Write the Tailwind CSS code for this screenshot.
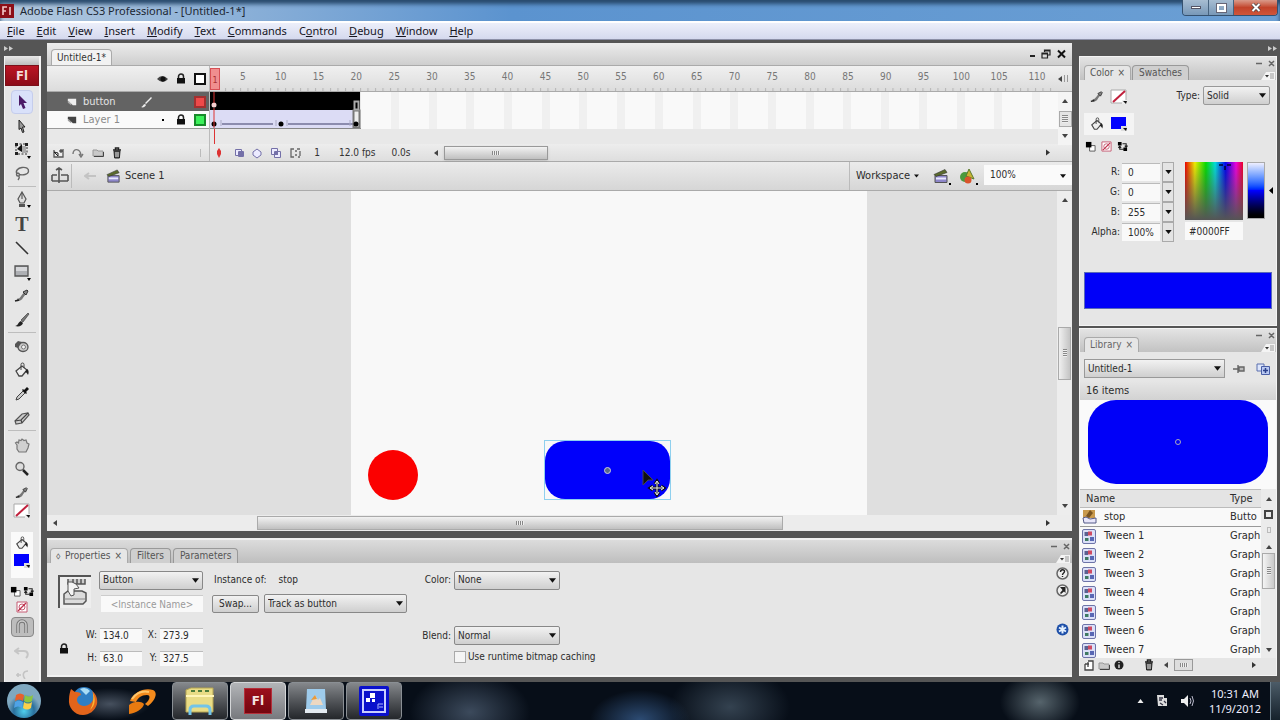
<!DOCTYPE html>
<html lang="en">
<head>
<meta charset="utf-8">
<meta name="viewport" content="width=device-width, initial-scale=1">
<title>Adobe Flash CS3 Professional - [Untitled-1*]</title>
<script src="https://cdn.jsdelivr.net/npm/@tailwindcss/browser@4"></script>
</head>
<body class="flex min-h-screen flex-col overflow-x-hidden bg-[#555555] font-['DejaVu_Sans_Condensed','DejaVu_Sans',sans-serif] text-[10px] leading-4 text-[#2c2c2c]">

<svg class="hidden">
  <symbol id="down" viewBox="0 0 8 5"><path d="M0 0h8L4 5z" fill="#111"/></symbol>
  <symbol id="up" viewBox="0 0 6 4"><path d="M0 4h6L3 0z" fill="#444"/></symbol>
  <symbol id="left" viewBox="0 0 4 6"><path d="M4 0v6L0 3z" fill="#444"/></symbol>
  <symbol id="right" viewBox="0 0 4 6"><path d="M0 0v6l4-3z" fill="#333"/></symbol>
  <symbol id="lock" viewBox="0 0 10 11"><path d="M2.500 5V3.500a2.500 2.500 0 0 1 5 0V5" fill="none" stroke="#222" stroke-width="1.500"/><rect x="1" y="5" width="8" height="5.500" fill="#111"/></symbol>
  <symbol id="page" viewBox="0 0 12 10"><path d="M1 1h10v8H7L1 3z" fill="currentColor"/><path d="M1 3v3l4 3V6z" fill="currentColor" opacity=".5"/></symbol>
  <symbol id="trash" viewBox="0 0 10 12"><path d="M1 3h8M3.500 2.500V1h3v1.500" fill="none" stroke="#222" stroke-width="1.500"/><path d="M2 4h6l-.6 7H2.600z" fill="#555" stroke="#222"/><path d="M4 5v5M6 5v5" stroke="#ddd"/></symbol>
  <symbol id="folder" viewBox="0 0 12 9"><path d="M1 2h4l1 1h5v5H1z" fill="#c9c9c9" stroke="#999"/><path d="M2 8.500h9.500V4" fill="none" stroke="#444"/></symbol>
  <symbol id="pencil" viewBox="0 0 16 16"><path d="M3 12c3 0 4-1 5-3l3-4" fill="none" stroke="#777" stroke-width="2.600"/><path d="M9 4l4-2 1 1-2 4z" fill="#888" stroke="#333"/><path d="M1 13l4-1" stroke="#222" stroke-width="1.600"/></symbol>
  <symbol id="bucket" viewBox="0 0 16 16"><path d="M2 9l6-5 5 4-5 6H5z" fill="#eee" stroke="#444" stroke-width="1.300"/><path d="M7 8V2.500a1.500 1.500 0 0 1 3 0V6" fill="none" stroke="#444"/><path d="M13 7c2 1 2 4 1 6-1-2-2-3-3-3z" fill="#222"/></symbol>
  <symbol id="nostroke" viewBox="0 0 18 16"><path d="M1 1h15v13H1z" fill="#fff" stroke="#aaa"/><path d="M3 13L15 2" stroke="#c0203c" stroke-width="2"/><path d="M12 11h5v4h-5z" fill="#eee"/><path d="M13 12h4l-1 3z" fill="#111"/></symbol>
  <symbol id="bluefill" viewBox="0 0 18 16"><path d="M1 1h15v12H1z" fill="#00f"/><path d="M11 10h6v5h-6z" fill="#ddd"/><path d="M13 12h4l-1 3z" fill="#111"/></symbol>
  <symbol id="bw" viewBox="0 0 12 12"><path d="M5 5h6v6H5z" fill="#fff" stroke="#555"/><path d="M1 1h6v6H1z" fill="#000"/></symbol>
  <symbol id="none" viewBox="0 0 12 12"><path d="M1 1h10v10H1z" fill="#fff" stroke="#c55a72"/><circle cx="6" cy="6" r="3" fill="none" stroke="#c55a72"/><path d="M2 10l8-8" stroke="#c0304c" stroke-width="1.300"/></symbol>
  <symbol id="swap" viewBox="0 0 12 12"><path d="M1 1h4v4H1zM7 7h4v4H7z" fill="#000"/><path d="M6 3h4v3M8 9H3V6M1.500 7.500L3 5.500l1.500 2M8.500 5L10 7l1.500-2" fill="none" stroke="#222" stroke-width="1.200"/></symbol>
  <symbol id="clap" viewBox="0 0 16 16"><path d="M2 7h12v7H2z" fill="#8d86c9" stroke="#555"/><path d="M3 9h10v2H3z" fill="#e8e8ff"/><path d="M1 6L12 1l2 3L3 8z" fill="#5b6b2c" stroke="#333" stroke-width=".6"/></symbol>
  <symbol id="graphic" viewBox="0 0 14 15"><rect x=".5" y=".5" width="13" height="14" rx="1.500" fill="#dbe0f8" stroke="#6e74a8"/><path d="M2.500 3h3.500v4H2.500z" fill="#5b6190"/><path d="M6 2.500h4v4H6z" fill="#cf4a62"/><path d="M8 8h4v4H8z" fill="#5867b4"/><path d="M3 9h3.500v3H3z" fill="#3f7a62"/></symbol>
  <symbol id="menuopt" viewBox="0 0 14 9"><path d="M0 9L5 1h9v8z" fill="#f4f4f4"/><path d="M4 4h4L6 6.500z" fill="#333"/><path d="M10 2v6M12 2v6" stroke="#999"/></symbol>
</svg>

<!-- title bar -->
<header>
  <div class="flex h-[21px] items-center bg-linear-to-r from-[#b4c9de] via-[#5b93cf] via-40% to-[#6b9fd4] font-['Noto_Sans',sans-serif] text-[#1c2733] shadow-[inset_0_4px_4px_#27496b]">
    <svg class="h-4 w-[14px] shrink-0" viewBox="0 0 14 16"><path d="M0 1h14v14H0z" fill="#8c0f18"/><path d="M3 12V4h4M3 8h3M10 4v8" fill="none" stroke="#f2c9c9" stroke-width="1.600"/></svg>
    <h1 class="ml-1.5 whitespace-nowrap text-[11px]">Adobe Flash CS3 Professional - [Untitled-1*]</h1>
    <div class="mr-0.5 ml-auto flex h-4 self-start overflow-hidden rounded-b border-x border-b border-[#35516f]">
      <button aria-label="Minimize" class="flex w-[26px] items-center justify-center border-r border-[#47637f] bg-linear-to-b from-[#a7bdd2] to-[#7898b8]"><span class="h-[3px] w-[10px] border border-[#556] bg-white"></span></button>
      <button aria-label="Maximize" class="flex w-[25px] items-center justify-center border-r border-[#47637f] bg-linear-to-b from-[#a7bdd2] to-[#7898b8]"><span class="h-2 w-[9px] border-2 border-white outline outline-[#667]"></span></button>
      <button aria-label="Close" class="flex w-[43px] items-center justify-center bg-linear-to-b from-[#d99a8a] via-[#c2432a] to-[#d0563a]"><svg class="h-[9px] w-[10px]" viewBox="0 0 10 9"><path d="M1.500 1l7 7M8.500 1l-7 7" stroke="#444" stroke-width="3.500"/><path d="M1.500 1l7 7M8.500 1l-7 7" stroke="#fff" stroke-width="2"/></svg></button>
    </div>
  </div>
  <nav class="flex h-[19px] items-center gap-3 border-t-2 border-b border-t-white border-b-[#8d90a8] bg-linear-to-b from-[#eceffa] to-[#d5d9ee] px-[7px] font-['Noto_Sans',sans-serif] text-[11px] text-[#15151f]">
    <a href="#"><u>F</u>ile</a><a href="#"><u>E</u>dit</a><a href="#"><u>V</u>iew</a><a href="#"><u>I</u>nsert</a><a href="#"><u>M</u>odify</a><a href="#"><u>T</u>ext</a><a href="#"><u>C</u>ommands</a><a href="#">C<u>o</u>ntrol</a><a href="#"><u>D</u>ebug</a><a href="#"><u>W</u>indow</a><a href="#"><u>H</u>elp</a>
  </nav>
</header>

<div class="flex flex-1 pr-[3px] pl-1">

  <!-- tools panel -->
  <aside class="flex w-[37px] shrink-0 flex-col">
    <div class="flex h-4 items-center text-[#ddd]"><svg class="h-[5px] w-[9px]" viewBox="0 0 9 5"><path d="M0 0l4 2.500L0 5zM5 0l4 2.500L5 5z" fill="#ccc"/></svg></div>
    <div class="flex flex-1 flex-col items-center border-r-2 border-l border-[#f4f4f4] bg-[#e6e6e6]">
      <div class="h-[9px] w-full bg-linear-to-b from-[#e8e8e8] to-[#bdbdbd]"></div>
      <div class="mb-1 flex h-[21px] w-full items-center justify-center border border-[#7b1019] bg-linear-to-b from-[#bb1424] to-[#8d0c17] text-[13px] font-bold text-[#f3dcdc]">Fl</div>
      <div class="flex flex-col items-center">
        <button aria-label="Selection" class="flex h-6 w-[22px] items-center justify-center rounded-sm border border-[#c5cdec] bg-[#d9e1fa]"><svg class="size-4" viewBox="0 0 16 16"><path d="M5 1l8 8H9.500l2 5-2.500 1-2-5L5 12z" fill="#4a1a66"/></svg></button>
        <button aria-label="Subselection" class="flex h-6 items-center justify-center"><svg class="size-4" viewBox="0 0 16 16"><path d="M5 2l6 7H8.500l1.500 5-1.500.5L7 10l-2 1.500z" fill="#999" stroke="#222"/></svg></button>
        <button aria-label="Free Transform" class="flex h-[23px] items-center justify-center"><svg class="size-[18px]" viewBox="0 0 18 18"><path d="M3 3h11v10H3z" fill="none" stroke="#333" stroke-dasharray="2 1.500"/><path d="M2 2h3v3H2zM12 2h3v3h-3zM2 11h3v3H2z" fill="#222"/><path d="M4 8l5-5v8z" fill="#111"/><path d="M9 5h4v7H9z" fill="#aaa"/><path d="M14 15h4l-2 3z"/></svg></button>
        <button aria-label="Lasso" class="flex h-6 items-center justify-center"><svg class="size-4" viewBox="0 0 16 16"><path d="M3 9C1 6 4 3 8 2.500s7 1 6.500 4S9 10.500 5 9.500M4 8c2 1 2 3 0 3s-2-3 0-3m1 3c1 2 0 3-1 4" fill="none" stroke="#666" stroke-width="1.400"/></svg></button>
      </div>
      <hr class="my-px w-7 border-[#bdbdbd]">
      <div class="flex flex-col items-center">
        <button aria-label="Pen" class="flex h-6 items-center justify-center"><svg class="size-[18px]" viewBox="0 0 18 18"><path d="M9 1l4 7-2 4H7L5 8z" fill="#ddd" stroke="#555" stroke-width="1.200"/><path d="M9 2v6" stroke="#444"/><path d="M6 13h6v3H6z" fill="#555"/><path d="M14 14h4l-2 3z"/></svg></button>
        <button aria-label="Text" class="flex h-6 items-center justify-center font-['Liberation_Serif',serif] text-[20px] font-bold text-[#444]">T</button>
        <button aria-label="Line" class="flex h-6 items-center justify-center"><svg class="size-4" viewBox="0 0 16 16"><path d="M2 2l12 12" stroke="#333" stroke-width="1.600"/></svg></button>
        <button aria-label="Rectangle" class="flex h-6 items-center justify-center"><svg class="size-[18px]" viewBox="0 0 18 18"><path d="M2 3h13v10H2z" fill="#aeb0b4" stroke="#555" stroke-width="1.300"/><path d="M3 4h11v4H3z" fill="#d6d7da"/><path d="M14 15h4l-2 3z"/></svg></button>
        <button aria-label="Pencil" class="flex h-6 items-center justify-center"><svg class="size-4"><use href="#pencil"/></svg></button>
        <button aria-label="Brush" class="flex h-[23px] items-center justify-center"><svg class="size-4" viewBox="0 0 16 16"><path d="M14 1L7 8l2 2 6-8z" fill="#777" stroke="#444" stroke-width=".7"/><path d="M1 14c3 0 3-4 6-5l2 2c-1 3-4 4-8 3z" fill="#222"/></svg></button>
      </div>
      <hr class="my-px w-7 border-[#bdbdbd]">
      <div class="flex flex-col items-center">
        <button aria-label="Ink Bottle" class="flex h-6 items-center justify-center"><svg class="size-4" viewBox="0 0 16 16"><ellipse cx="9" cy="9" rx="5" ry="4.500" fill="#ccc" stroke="#555" stroke-width="1.300"/><circle cx="9.500" cy="9" r="2" fill="#f4f4f4" stroke="#777"/><path d="M1 6l3-3 4 1-4 6-3-1z" fill="#555"/></svg></button>
        <button aria-label="Paint Bucket" class="flex h-6 items-center justify-center"><svg class="size-4"><use href="#bucket"/></svg></button>
        <button aria-label="Eyedropper" class="flex h-6 items-center justify-center"><svg class="size-4" viewBox="0 0 16 16"><path d="M2 14l1-3 6-6 2 2-6 6z" fill="#ccc" stroke="#444"/><path d="M8 4l4 4 1-1-1-1 3-3-2-2-3 3-1-1z" fill="#111"/></svg></button>
        <button aria-label="Eraser" class="flex h-[23px] items-center justify-center"><svg class="size-4" viewBox="0 0 16 16"><path d="M1 11l7-7 6-1 1 2-7 8-6 1z" fill="#ccc" stroke="#555" stroke-width="1.200"/><path d="M1 11l6-1 7-7M7 10l1 3" fill="none" stroke="#444" stroke-width="1.200"/></svg></button>
      </div>
      <hr class="my-px w-7 border-[#bdbdbd]">
      <div class="flex flex-col items-center">
        <button aria-label="Hand" class="flex h-[26px] items-center justify-center"><svg class="size-4" viewBox="0 0 16 16"><path d="M3 8L1.500 6 3 5l1.500 1L5 3l2 .5L8 2l2 1.500L12 3l1 3 2 1-1 4-2 4H5l-2-3z" fill="#d0d0d0" stroke="#777" stroke-width="1.200"/></svg></button>
        <button aria-label="Zoom" class="flex h-[22px] items-center justify-center"><svg class="size-4" viewBox="0 0 16 16"><circle cx="6" cy="5.500" r="4" fill="#ddd" stroke="#666" stroke-width="1.400"/><path d="M9 9l5 5" stroke="#222" stroke-width="2.500"/></svg></button>
      </div>
      <div class="mt-1 flex flex-col items-center">
        <button aria-label="Stroke pencil" class="h-[18px]"><svg class="h-[14px] w-[14px]"><use href="#pencil"/></svg></button>
        <button aria-label="Stroke colour" class="h-[18px]"><svg class="h-4 w-[18px]"><use href="#nostroke"/></svg></button>
      </div>
      <div class="mt-3 flex h-[46px] w-[22px] flex-col items-center bg-[#fafafa] pt-0.5">
        <button aria-label="Fill bucket" class="h-[18px]"><svg class="h-[14px] w-[14px]"><use href="#bucket"/></svg></button>
        <button aria-label="Fill colour" class="h-[18px]"><svg class="h-4 w-[18px]"><use href="#bluefill"/></svg></button>
      </div>
      <div class="mt-2 flex gap-0.5"><svg class="size-[11px]"><use href="#bw"/></svg><svg class="size-[11px]"><use href="#swap"/></svg></div>
      <svg class="mt-1 size-3"><use href="#none"/></svg>
      <button aria-label="Snap to objects" class="mt-1 flex h-5 w-[23px] items-center justify-center rounded-sm border border-[#888] bg-[#bdbdbd]"><svg class="size-4" viewBox="0 0 16 16"><path d="M4 14V6a4 4 0 0 1 8 0v8" fill="none" stroke="#777" stroke-width="3.500"/><path d="M4 14V6a4 4 0 0 1 8 0v8" fill="none" stroke="#ccc" stroke-width="1.500"/></svg></button>
      <svg class="mt-2 h-4 w-4" viewBox="0 0 16 16"><path d="M5 3L1 6l4 3M1 6h9c4 0 5 4 2 7" fill="none" stroke="#c6c6c6" stroke-width="2"/></svg>
      <svg class="mt-2 h-[10px] w-4" viewBox="0 0 16 10"><path d="M2 6h5M4 4v4M14 2c-5 0-6 4-3 8" fill="none" stroke="#c4c4c4" stroke-width="1.600"/></svg>
    </div>
  </aside>

  <!-- document and properties -->
  <div class="ml-1.5 flex min-w-0 flex-1 flex-col pt-[3px] pb-[5px]">
    <main class="flex flex-1 flex-col bg-[#e8e8e8]">
      <div class="flex h-[23px] items-end border-b border-[#aaa] bg-linear-to-b from-[#ececec] to-[#cecece] pl-1">
        <div class="flex h-4 items-center rounded-t-sm border-x border-t border-[#aaa] bg-[#f2f2f2] px-[5px] text-[#333]">Untitled-1*</div>
        <div class="mr-1.5 mb-1.5 ml-auto flex items-end gap-1.5">
          <button aria-label="Minimize document" class="mb-0.5 h-0.5 w-[5px] bg-[#222]"></button>
          <button aria-label="Restore document"><svg class="h-[10px] w-[10px]" viewBox="0 0 10 10"><path d="M3.500 3V1h5.500v5H7M1 4h5.500v5H1zM1 5h6M3 2h6" fill="none" stroke="#222" stroke-width="1.200"/></svg></button>
          <button aria-label="Close document"><svg class="h-[10px] w-[9px]" viewBox="0 0 9 10"><path d="M1 1.500l7 7M8 1.500l-7 7" stroke="#111" stroke-width="2"/></svg></button>
        </div>
      </div>

      <!-- timeline -->
      <section aria-label="Timeline">
        <div class="flex h-[26px] border-b border-[#aaa] bg-linear-to-b from-[#f0f0f0] to-[#dcdcdc]">
          <div class="flex w-[163px] shrink-0 items-center justify-end gap-2 border-r border-[#bbb] pr-[3px]">
            <svg class="h-2 w-[11px]" viewBox="0 0 11 8"><path d="M0 4q5-6 11 0-5 6-11 0z" fill="#444"/><circle cx="6" cy="4" r="2.500" fill="#111"/></svg>
            <svg class="h-[11px] w-[10px]"><use href="#lock"/></svg>
            <svg class="size-3" viewBox="0 0 12 12"><path d="M1 1h10v10H1z" fill="#fff" stroke="#111" stroke-width="2"/></svg>
          </div>
          <div class="mt-0.5 h-[22px] w-[10px] shrink-0 border border-[#d65055] bg-[#f08f8f] text-center text-[9px] leading-[22px] text-[#a33]">1</div>
          <div class="ml-1 flex min-w-0 flex-1 flex-col">
            <div id="ruler" class="flex flex-1 items-center text-[#777]"></div>
            <svg class="h-[3px] w-full"><defs><pattern id="ticks" width="7.500" height="3" patternUnits="userSpaceOnUse"><path d="M1 0h1v3H1z" fill="#b4b4b4"/></pattern></defs><rect width="100%" height="3" fill="url(#ticks)"/></svg>
          </div>
          <div class="flex w-4 items-center justify-end gap-0.5 pr-1"><svg class="h-1.5 w-1"><use href="#left"/></svg><span class="h-[7px] w-1 border-x border-[#999]"></span></div>
        </div>
        <div class="flex">
          <div class="w-[163px] shrink-0 border-r border-[#bbb] text-[11px]">
            <div class="flex h-[19px] items-center bg-[#636363] pr-[3px] pl-5 text-[#e4e4e4]"><svg class="mr-1.5 h-[10px] w-[10px] text-[#eee]"><use href="#page"/></svg>button<svg class="ml-6 h-3 w-3" viewBox="0 0 12 12"><path d="M11 1L5 7l1 1 6-6zM1 11c2 0 2-3 4-3l1 1c-1 2-3 3-5 2z" fill="#eee"/></svg><span class="ml-auto size-3 border-2 border-[#a23030] bg-[#ef4a4a]"></span></div>
            <div class="flex h-[18px] items-center border-b border-[#999] bg-[#fafafa] pr-[3px] pl-5 text-[#8b8b8b]"><svg class="mr-1.5 h-[10px] w-[10px] text-[#444]"><use href="#page"/></svg>Layer 1<span class="mr-3 ml-auto size-[2px] bg-black"></span><svg class="mr-2 h-[11px] w-[10px]"><use href="#lock"/></svg><span class="size-3 border-2 border-[#178a2a] bg-[#3cf05a]"></span></div>
          </div>
          <svg class="h-[37px] w-[151px] shrink-0" viewBox="0 0 151 37">
            <path d="M0 0h150v18H0z"/><path d="M0 18h150v18H0z" fill="#dcdcf5"/>
            <path d="M12 32h51M78 32h65" stroke="#8c8cae" stroke-width="2"/><path d="M11 28v6M66 28v6M77 28v6M140 28v6" stroke="#aaaac4"/>
            <path d="M143.500 18.500h6v17h-6z" fill="#eee" stroke="#777" stroke-width="2"/><path d="M144.500 9.500h4v8h-4z" stroke="#aaa" stroke-width="2"/>
            <circle cx="4" cy="32" r="2.500"/><circle cx="71" cy="32" r="2.500"/><circle cx="146" cy="32" r="2.500"/><circle cx="4" cy="13" r="2.500" fill="#f5cfcf"/>
            <path d="M4 0v11M4 16v21" stroke="#d33"/><path d="M0 36.500h151" stroke="#888"/>
          </svg>
          <div class="min-w-0 flex-1 bg-[#f9f9f9]"><div id="frames" class="mr-[3px] ml-[15px] flex h-full"></div></div>
          <div class="-mb-4 flex w-[14px] flex-col items-center justify-between bg-[#f4f4f4] py-[7px]">
            <svg class="h-1 w-1.5"><use href="#up"/></svg>
            <span class="flex h-4 w-[13px] items-center justify-center border border-[#aaa] bg-[#e4e4e4]"><span class="h-2 w-1.5 bg-[repeating-linear-gradient(#888_0_1px,#eee_1px_2px)]"></span></span>
            <svg class="h-1 w-1.5 rotate-180"><use href="#up"/></svg>
          </div>
        </div>
        <div class="flex h-[15px]"><div class="w-[163px] border-r border-[#bbb]"></div><div class="ml-1 w-px bg-[#d33]"></div></div>
        <div class="flex h-[18px] items-center border-b border-[#aaa] bg-linear-to-b from-[#ededed] to-[#dedede] text-[#333]">
          <div class="flex h-full w-[163px] shrink-0 items-center gap-2 border-r border-[#bbb] pl-1.5">
            <svg class="h-[10px] w-[11px]" viewBox="0 0 11 10"><path d="M1 2v7h9V1" fill="#eee" stroke="#555" stroke-width="1.300"/><path d="M1 4l4 4V5zM8 1v4M6 3h4" fill="none" stroke="#222"/></svg>
            <svg class="h-[10px] w-3" viewBox="0 0 12 10"><path d="M1 6c0-6 7-6 8 1M7 6l2 3 2-3" fill="none" stroke="#777" stroke-width="1.400"/></svg>
            <svg class="h-[9px] w-3"><use href="#folder"/></svg>
            <svg class="h-3 w-[10px]"><use href="#trash"/></svg>
            <span class="mr-2 ml-auto h-2 w-px bg-[#bbb]"></span>
          </div>
          <svg class="ml-[7px] h-[10px] w-1 shrink-0" viewBox="0 0 4 10"><path d="M2 0l2 3v3l-2 4-2-4V3z" fill="#d33"/></svg>
          <svg class="ml-3 h-3 w-[70px] shrink-0" viewBox="0 0 70 12"><g fill="#ecebff" stroke="#7470a8"><path d="M2.500 2.500h6v6h-6zM5.500 4.500h5v5h-5zM20 5l4-3 4 3v3l-4 3-4-3zM38.500 1.500h6v6h-6zM41.500 4.500h6v6h-6z"/></g><path d="M6 5h4v4H6zM42 4h3v4h-3z" fill="#7470a8"/><path d="M61 2h-3v8h3M64 2h3M65 10h2M67 4v5M62 4h2M62 8h2" fill="none" stroke="#666" stroke-width="1.300"/></svg>
          <span class="ml-2 w-3 text-center">1</span><span class="ml-4">12.0 fps</span><span class="ml-4">0.0s</span>
          <svg class="ml-6 h-1.5 w-1"><use href="#left"/></svg>
          <span class="ml-1.5 flex h-[14px] w-[104px] items-center justify-center border border-[#999] bg-linear-to-b from-[#f2f2f2] to-[#c0c0c0] shadow-sm"><span class="h-1 w-2 bg-[repeating-linear-gradient(90deg,#888_0_1px,#eee_1px_2px)]"></span></span>
          <svg class="mr-[22px] ml-auto h-[7px] w-1"><use href="#right"/></svg>
        </div>
      </section>

      <!-- edit bar -->
      <div class="flex h-[29px] items-center border-b border-[#aaa] bg-linear-to-b from-[#ebebeb] to-[#d6d6d6]">
        <svg class="ml-1 h-[18px] w-[18px]" viewBox="0 0 18 18"><path d="M8 1v15M5 3l3-2 3 2M1 8h5M10 8h7M1 14h16M1 8v6M17 8v6" fill="none" stroke="#555" stroke-width="1.600"/></svg>
        <span class="ml-0.5 h-6 w-px bg-[#bbb]"></span>
        <svg class="ml-3 h-2 w-3" viewBox="0 0 12 8"><path d="M12 4H2M5 1L1 4l4 3" fill="none" stroke="#c3c3c3" stroke-width="2"/></svg>
        <svg class="ml-2.5 h-[15px] w-[15px]"><use href="#clap"/></svg>
        <span class="ml-1 text-[11px]">Scene 1</span>
        <span class="ml-auto h-7 w-px bg-[#bbb]"></span>
        <button class="ml-1.5 flex items-center gap-1 text-[11px]">Workspace<svg class="h-1 w-[5px]"><use href="#down"/></svg></button>
        <button aria-label="Edit scene" class="ml-3.5 flex items-end"><svg class="h-[17px] w-[16px]"><use href="#clap"/></svg><span class="size-[2px] bg-black"></span></button>
        <button aria-label="Edit symbols" class="ml-2 flex items-end"><svg class="h-[17px] w-[17px]" viewBox="0 0 17 17"><circle cx="6" cy="9" r="5" fill="#4c9a3e"/><path d="M7 8L10 1l5 10z" fill="#c8b433" stroke="#5a7a2c"/><circle cx="9" cy="12" r="3.500" fill="#d9542c"/></svg><span class="size-[2px] bg-black"></span></button>
        <div class="relative ml-1.5 w-[88px] self-start pt-[3px]">
          <select aria-label="Zoom level" class="block h-[20px] w-full appearance-none bg-[#fafafa] pl-1.5"><option>100%</option></select>
          <svg class="pointer-events-none absolute top-3 right-1.5 h-1 w-1.5"><use href="#down"/></svg>
        </div>
      </div>

      <!-- stage -->
      <div class="flex flex-1">
        <div class="flex flex-1 overflow-hidden bg-[#dfdfdf]">
          <div class="relative ml-[304px] w-[516px] bg-[#f8f8f8]">
            <div class="absolute top-[259px] left-[17px] size-[50px] rounded-full bg-[#fb0000]"></div>
            <div class="absolute top-[249px] left-[193px] h-[60px] w-[127px] border border-[#8fd0ee]"><div class="flex h-full items-center justify-center rounded-[20px] bg-[#0000fb]"><span class="size-[7px] rounded-full border border-[#ccd] bg-[#5a6a8a]"></span></div></div>
            <svg class="absolute top-[278px] left-[290px] h-7 w-7" viewBox="0 0 28 28"><path d="M2 1l10 10H7l-5 5z" fill="#111" stroke="#445" /><path d="M16 13v12M10 19h12M14 15l2-3 2 3M14 23l2 3 2-3M12 17l-3 2 3 2M20 17l3 2-3 2" fill="none" stroke="#111" stroke-width="3"/><path d="M16 13v12M10 19h12M14 15l2-3 2 3M14 23l2 3 2-3M12 17l-3 2 3 2M20 17l3 2-3 2" fill="none" stroke="#eee"/></svg>
          </div>
        </div>
        <div class="flex w-[15px] flex-col items-center justify-between bg-[#ededed] py-[7px]">
          <svg class="h-1 w-1.5"><use href="#up"/></svg>
          <span class="flex h-[53px] w-[13px] items-center justify-center border border-[#aaa] bg-linear-to-r from-[#f0f0f0] to-[#c4c4c4]"><span class="h-2 w-1 bg-[repeating-linear-gradient(#888_0_1px,#eee_1px_2px)]"></span></span>
          <svg class="h-1 w-1.5 rotate-180"><use href="#up"/></svg>
        </div>
      </div>
      <div class="flex h-4 items-center bg-[#ececec] px-1.5">
        <svg class="h-1.5 w-1"><use href="#left"/></svg>
        <span class="ml-[200px] flex h-[14px] w-[526px] items-center justify-center border border-[#aaa] bg-linear-to-b from-[#f2f2f2] to-[#c0c0c0]"><span class="h-1 w-2 bg-[repeating-linear-gradient(90deg,#888_0_1px,#eee_1px_2px)]"></span></span>
        <svg class="mr-4 ml-auto h-1.5 w-1"><use href="#right"/></svg>
      </div>
    </main>

    <!-- properties -->
    <section aria-label="Properties" class="mt-[7px] flex h-[139px] flex-col border-t-2 border-b-2 border-[#f2f2f2] bg-[#e6e6e6]">
      <div class="flex h-[23px] items-end bg-linear-to-b from-[#dcdcdc] to-[#bebebe] pl-[3px] text-[#555]">
        <div class="flex h-[15px] items-center gap-1 rounded-t-sm border border-b-0 border-[#aaa] bg-[#e6e6e6] px-[5px]">⬨<span>Properties</span><span>×</span></div>
        <div class="ml-0.5 flex h-[15px] items-center rounded-t-sm border border-b-0 border-[#999] bg-[#cfcfcf] px-1.5">Filters</div>
        <div class="ml-0.5 flex h-[15px] items-center rounded-t-sm border border-b-0 border-[#999] bg-[#cfcfcf] px-1.5">Parameters</div>
        <div class="mr-0.5 ml-auto flex flex-col items-end gap-1"><svg class="h-[7px] w-5" viewBox="0 0 20 7"><path d="M1 3.500h6M14 1l5 5M19 1l-5 5" stroke="#666" stroke-width="1.500"/></svg><svg class="h-[9px] w-[14px]"><use href="#menuopt"/></svg></div>
      </div>
      <div class="flex flex-1 pt-2">
        <div class="flex w-[52px] shrink-0 flex-col items-start pl-[11px]">
          <svg class="mt-1 h-[33px] w-[33px]" viewBox="0 0 33 33"><path d="M2 2h31v31H2z" fill="#eee"/><path d="M1 33V1h32" fill="none" stroke="#555" stroke-width="2"/><path d="M10 4v5h17V4M15 4v5M19 4v5M23 4v5" fill="#ccc" stroke="#555" stroke-width="1.500"/><path d="M6 19l4-3h14l4 2v8l-3 3H6z" fill="#dcdcdc" stroke="#555" stroke-width="1.500"/><path d="M6 24h21" stroke="#888"/><path d="M10 7v9l3 5 3-1v-6l5-1-3-4-4-2z" fill="#f4f4f4" stroke="#555"/></svg>
          <svg class="mt-[35px] ml-px h-[11px] w-[10px]"><use href="#lock"/></svg>
        </div>
        <div class="flex w-[310px] shrink-0 flex-col">
          <div class="flex h-[18px] items-center">
            <div class="relative w-[104px]"><select aria-label="Symbol behavior" class="block h-[19px] w-full appearance-none rounded-xs border border-[#888] bg-linear-to-b from-[#f2f2f2] to-[#cfcfcf] pl-[3px]"><option>Button</option></select><svg class="pointer-events-none absolute top-[7px] right-1 h-[5px] w-[7px]"><use href="#down"/></svg></div>
            <span class="ml-[11px]">Instance of:</span><span class="ml-3">stop</span>
          </div>
          <div class="mt-[5px] flex h-[19px] items-center">
            <input aria-label="Instance name" placeholder="<Instance Name>" class="ml-0.5 h-[17px] w-[102px] border-t border-[#ccc] bg-[#f9f9f9] text-center placeholder:text-[#999]">
            <button class="ml-[9px] h-[18px] w-[47px] rounded-xs border border-[#888] bg-linear-to-b from-[#f2f2f2] to-[#cfcfcf]">Swap...</button>
            <div class="relative ml-[5px] w-[143px]"><select aria-label="Tracking" class="block h-[19px] w-full appearance-none rounded-xs border border-[#888] bg-linear-to-b from-[#f2f2f2] to-[#cfcfcf] pl-[3px]"><option>Track as button</option></select><svg class="pointer-events-none absolute top-[7px] right-1 h-[5px] w-[7px]"><use href="#down"/></svg></div>
          </div>
          <div class="-ml-4 mt-3.5 grid w-[119px] grid-cols-[14px_42px_18px_43px] items-center gap-y-[7px]">
            <label for="w" class="text-right">W:</label><input id="w" value="134.0" class="ml-[3px] h-[15px] w-[42px] border-t border-[#bbb] bg-[#f9f9f9] pl-[3px]">
            <label for="x" class="text-right">X:</label><input id="x" value="273.9" class="ml-[3px] h-[15px] w-[43px] border-t border-[#bbb] bg-[#f9f9f9] pl-[3px]">
            <label for="h" class="text-right">H:</label><input id="h" value="63.0" class="ml-[3px] h-[15px] w-[42px] border-t border-[#bbb] bg-[#f9f9f9] pl-[3px]">
            <label for="y" class="text-right">Y:</label><input id="y" value="327.5" class="ml-[3px] h-[15px] w-[43px] border-t border-[#bbb] bg-[#f9f9f9] pl-[3px]">
          </div>
        </div>
        <div class="flex flex-1 flex-col pl-3">
          <div class="flex h-[18px] items-center"><label for="color" class="w-[30px] text-right whitespace-nowrap">Color:</label><div class="relative ml-[3px] w-[106px]"><select id="color" class="block h-[19px] w-full appearance-none rounded-xs border border-[#888] bg-linear-to-b from-[#f2f2f2] to-[#cfcfcf] pl-[3px]"><option>None</option></select><svg class="pointer-events-none absolute top-[7px] right-1 h-[5px] w-[7px]"><use href="#down"/></svg></div></div>
          <div class="mt-[37px] flex h-[19px] items-center"><label for="blend" class="w-[30px] text-right whitespace-nowrap">Blend:</label><div class="relative ml-[3px] w-[106px]"><select id="blend" class="block h-[19px] w-full appearance-none rounded-xs border border-[#888] bg-linear-to-b from-[#f2f2f2] to-[#cfcfcf] pl-[3px]"><option>Normal</option></select><svg class="pointer-events-none absolute top-[7px] right-1 h-[5px] w-[7px]"><use href="#down"/></svg></div></div>
          <label class="mt-1 ml-[33px] flex items-center gap-0.5"><input type="checkbox" class="size-3 appearance-none border border-[#aaa] bg-[#f5f5f5]">Use runtime bitmap caching</label>
        </div>
        <div class="flex w-5 flex-col items-center">
          <svg class="-mt-1 size-[13px]" viewBox="0 0 13 13"><circle cx="6.500" cy="6.500" r="5.500" fill="#eee" stroke="#666" stroke-width="1.500"/><path d="M4.500 5c0-3 4-3 4-.5C8.500 6 6.500 6 6.500 8M6.500 9v1" fill="none" stroke="#222" stroke-width="1.400"/></svg>
          <svg class="mt-1 size-[13px]" viewBox="0 0 13 13"><circle cx="6.500" cy="6.500" r="5.500" fill="#eee" stroke="#666" stroke-width="1.500"/><path d="M4 3h5.500v6L8 7.500 5 10 4 9l2.500-3z" fill="#222"/></svg>
          <svg class="mt-[26px] size-[13px]" viewBox="0 0 13 13"><circle cx="6.500" cy="6.500" r="6" fill="#1d4fa8"/><path d="M6.500 2.500v8M3 4.500l7 4M10 4.500l-7 4" stroke="#e6f2ff" stroke-width="2"/></svg>
        </div>
      </div>
    </section>
  </div>

  <!-- right dock -->
  <aside class="ml-[7px] flex w-[198px] shrink-0 flex-col pb-1.5">
    <div class="flex h-4 items-center justify-end"><svg class="h-[5px] w-[9px]" viewBox="0 0 9 5"><path d="M0 0l4 2.500L0 5zM5 0l4 2.500L5 5z" fill="#ccc"/></svg></div>
    <section aria-label="Color" class="flex h-[270px] flex-col border border-[#f4f4f4] bg-[#e6e6e6]">
      <div class="flex h-[23px] items-end bg-linear-to-b from-[#e4e4e4] to-[#c2c2c2] pl-1 text-[#555]">
        <div class="flex h-[15px] items-center gap-1 rounded-t-sm border border-b-0 border-[#aaa] bg-[#e6e6e6] px-[5px]">Color<span>×</span></div>
        <div class="ml-px flex h-[15px] items-center rounded-t-sm border border-b-0 border-[#999] bg-[#cfcfcf] px-1.5">Swatches</div>
        <div class="mr-px ml-auto flex flex-col items-end gap-1"><svg class="h-[7px] w-5" viewBox="0 0 20 7"><path d="M1 3.500h6M14 1l5 5M19 1l-5 5" stroke="#666" stroke-width="1.500"/></svg><svg class="h-[9px] w-[14px]"><use href="#menuopt"/></svg></div>
      </div>
      <div class="mt-1.5 flex items-start justify-between pr-1.5 pl-1">
        <div>
          <div class="flex h-[22px] items-center gap-1.5 px-1.5"><svg class="size-[14px]"><use href="#pencil"/></svg><svg class="h-4 w-[18px]"><use href="#nostroke"/></svg></div>
          <div class="mt-[5px] flex h-[22px] items-center gap-1.5 bg-[#f4f4f4] px-1.5"><svg class="size-[14px]"><use href="#bucket"/></svg><svg class="h-4 w-[18px]"><use href="#bluefill"/></svg></div>
          <div class="mt-1.5 ml-px flex gap-[5px]"><svg class="size-[11px]"><use href="#bw"/></svg><svg class="size-[11px]"><use href="#none"/></svg><svg class="size-[11px]"><use href="#swap"/></svg></div>
        </div>
        <div class="flex items-center gap-[3px]"><label for="type">Type:</label><div class="relative w-[67px]"><select id="type" class="block h-[19px] w-full appearance-none rounded-xs border border-[#999] bg-linear-to-b from-[#f2f2f2] to-[#cfcfcf] pl-[3px]"><option>Solid</option></select><svg class="pointer-events-none absolute top-[7px] right-1 h-[5px] w-[7px]"><use href="#down"/></svg></div></div>
      </div>
      <div class="mt-2.5 flex pl-1">
        <div class="grid grid-cols-[36px_38px_12px] items-center gap-x-0.5">
          <label for="r" class="text-right">R:</label><input id="r" value="0" class="h-[18px] w-full border-t border-[#bbb] bg-[#f9f9f9] pl-1.5"><button aria-label="Red" class="flex h-5 items-center justify-center border border-[#aaa] bg-[#e4e4e4]"><svg class="h-1 w-[7px]"><use href="#down"/></svg></button>
          <label for="g" class="text-right">G:</label><input id="g" value="0" class="h-[18px] w-full border-t border-[#bbb] bg-[#f9f9f9] pl-1.5"><button aria-label="Green" class="flex h-5 items-center justify-center border border-[#aaa] bg-[#e4e4e4]"><svg class="h-1 w-[7px]"><use href="#down"/></svg></button>
          <label for="b" class="text-right">B:</label><input id="b" value="255" class="h-[18px] w-full border-t border-[#bbb] bg-[#f9f9f9] pl-1.5"><button aria-label="Blue" class="flex h-5 items-center justify-center border border-[#aaa] bg-[#e4e4e4]"><svg class="h-1 w-[7px]"><use href="#down"/></svg></button>
          <label for="a" class="text-right">Alpha:</label><input id="a" value="100%" class="h-[18px] w-full border-t border-[#bbb] bg-[#f9f9f9] pl-1.5"><button aria-label="Alpha" class="flex h-5 items-center justify-center border border-[#aaa] bg-[#e4e4e4]"><svg class="h-1 w-[7px]"><use href="#down"/></svg></button>
        </div>
        <div class="ml-[11px] w-[58px]">
          <svg class="block h-[58px] w-[58px]" viewBox="0 0 58 58"><defs><linearGradient id="hue"><stop offset="0" stop-color="#e00"/><stop offset=".17" stop-color="#ee0"/><stop offset=".36" stop-color="#0d0"/><stop offset=".52" stop-color="#0dd"/><stop offset=".7" stop-color="#00e"/><stop offset=".88" stop-color="#e0d"/><stop offset="1" stop-color="#e02"/></linearGradient><linearGradient id="sat" x2="0" y2="1"><stop offset="0" stop-color="#555" stop-opacity="0"/><stop offset="1" stop-color="#555"/></linearGradient></defs><path d="M0 0h58v58H0z" fill="url(#hue)"/><path d="M0 0h58v58H0z" fill="url(#sat)"/><path d="M34 3h4M42 3h4M40 4v4" stroke="#003" stroke-width="1.500"/></svg>
          <input aria-label="Hex colour" value="#0000FF" class="mt-0.5 block h-[18px] w-full bg-[#f9f9f9] pl-1">
        </div>
        <div class="ml-1 h-[57px] w-[18px] border border-[#aaa] bg-linear-to-b from-[#eef] via-[#00f] via-50% to-black"></div>
        <svg class="mt-[25px] ml-1 h-[7px] w-1" viewBox="0 0 4 7"><path d="M4 0v7L0 3.500z"/></svg>
      </div>
      <div class="mx-1 mt-auto mb-4 h-[37px] border border-[#5a6ab8] bg-[#0000f8]"></div>
    </section>

    <section aria-label="Library" class="mt-0.5 flex flex-1 flex-col border border-[#f4f4f4] bg-[#e6e6e6]">
      <div class="flex h-[23px] items-end bg-linear-to-b from-[#e4e4e4] to-[#c2c2c2] pl-1 text-[#666]">
        <div class="flex h-[15px] items-center gap-1 rounded-t-sm border border-b-0 border-[#aaa] bg-[#e6e6e6] px-[5px]">Library<span>×</span></div>
        <div class="mr-px ml-auto flex flex-col items-end gap-1"><svg class="h-[7px] w-5" viewBox="0 0 20 7"><path d="M1 3.500h6M14 1l5 5M19 1l-5 5" stroke="#666" stroke-width="1.500"/></svg><svg class="h-[9px] w-[14px]"><use href="#menuopt"/></svg></div>
      </div>
      <div class="mt-[7px] flex items-center pr-1.5 pl-1">
        <div class="relative w-[141px]"><select aria-label="Document" class="block h-[19px] w-full appearance-none border border-[#999] bg-linear-to-b from-[#f2f2f2] to-[#cfcfcf] pl-[3px]"><option>Untitled-1</option></select><svg class="pointer-events-none absolute top-[7px] right-1 h-[5px] w-[7px]"><use href="#down"/></svg></div>
        <svg class="ml-2 h-[10px] w-3" viewBox="0 0 12 10"><path d="M0 5h5M5 1v8M6 3h5v4H6z" fill="#bbb" stroke="#666" stroke-width="1.400"/></svg>
        <svg class="ml-auto h-3 w-[14px]" viewBox="0 0 14 12"><path d="M1 1h7v7H1z" fill="#dde6fb" stroke="#5b6fae"/><path d="M5.500 3.500h8v8h-8z" fill="#b9c9f2" stroke="#4a5fa6"/><path d="M9.500 5v5M7 7.500h5" stroke="#2c418c" stroke-width="1.500"/></svg>
      </div>
      <div class="mt-[3px] flex h-[19px] items-center bg-linear-to-b from-[#e6e6e6] to-[#d2d2d2] px-1.5 text-[11px]">16 items</div>
      <div class="flex h-[89px] items-start justify-center bg-[#fafafa] px-2"><div class="flex h-[84px] w-full items-center justify-center rounded-[28px] bg-[#0000f8]"><span class="size-1.5 rounded-full border border-[#aab]"></span></div></div>
      <div class="flex h-[169px] overflow-hidden bg-[#f9f9f9] text-[11px]">
        <div class="min-w-0 flex-1 overflow-hidden">
          <table class="w-full table-fixed border-collapse text-left">
            <colgroup><col class="w-[24px]"><col><col class="w-[31px]"></colgroup>
            <thead><tr class="h-[18px] border-y border-[#bbb] bg-[#e4e4e4]"><th colspan="2" class="pl-1.5 font-normal">Name</th><th class="font-normal">Type</th></tr></thead>
            <tbody id="items"></tbody>
          </table>
        </div>
        <div class="flex w-[15px] flex-col items-center bg-[#ebebeb]">
          <svg class="mt-[7px] h-1.5 w-1.5"><use href="#up"/></svg>
          <span class="mt-2 size-[9px] border-2 border-[#444]"></span>
          <span class="mt-2 h-1.5 w-1 border border-[#bbb]"></span>
          <svg class="mt-3 h-1 w-1.5"><use href="#up"/></svg>
          <span class="mt-1 flex h-9 w-[13px] items-center justify-center border border-[#aaa] bg-linear-to-r from-[#f4f4f4] to-[#cacaca]"><span class="h-2 w-1 bg-[repeating-linear-gradient(#888_0_1px,#eee_1px_2px)]"></span></span>
          <svg class="mt-auto mb-1.5 h-1 w-1.5 rotate-180"><use href="#up"/></svg>
        </div>
      </div>
      <div class="flex h-[14px] items-center px-1">
        <svg class="h-[11px] w-[10px]" viewBox="0 0 10 11"><path d="M1 4v6h8V1H4M1 4h4M4 2v5" fill="#fff" stroke="#444" stroke-width="1.300"/></svg>
        <svg class="ml-1 h-[9px] w-3"><use href="#folder"/></svg>
        <svg class="ml-1 size-[10px]" viewBox="0 0 10 10"><circle cx="5" cy="5" r="4.500" fill="#222"/><path d="M5 4.500V8M5 2v1" stroke="#eee" stroke-width="1.300"/></svg>
        <svg class="ml-5 h-3 w-[10px]"><use href="#trash"/></svg>
        <svg class="ml-2.5 h-1.5 w-1"><use href="#left"/></svg>
        <span class="ml-1.5 flex h-3 w-[19px] items-center justify-center border border-[#999] bg-[#ddd]"><span class="h-1 w-2 bg-[repeating-linear-gradient(90deg,#888_0_1px,#eee_1px_2px)]"></span></span>
        <svg class="mr-4 ml-auto h-1.5 w-1"><use href="#right"/></svg>
      </div>
    </section>
  </aside>
</div>

<!-- taskbar -->
<footer class="flex h-[38px] items-center bg-[radial-gradient(ellipse_60px_40px_at_470px_30px,#3c4a5c,transparent),radial-gradient(ellipse_50px_30px_at_640px_38px,#2d4c74,transparent),radial-gradient(ellipse_60px_40px_at_730px_25px,#344250,transparent),radial-gradient(ellipse_40px_30px_at_1040px_20px,#56646c,transparent),radial-gradient(ellipse_40px_16px_at_110px_22px,#46505e,transparent)] bg-[#070e18] font-['Noto_Sans',sans-serif]">
  <button aria-label="Start" class="ml-1.5"><svg class="h-9 w-9" viewBox="0 0 36 36"><defs><radialGradient id="orb" cy=".8"><stop offset="0" stop-color="#4fd0ee"/><stop offset=".6" stop-color="#2a6f9c"/><stop offset="1" stop-color="#7fa8c0"/></radialGradient></defs><circle cx="18" cy="18" r="17" fill="url(#orb)"/><path d="M10 12q4-3 8 0l-1 6q-4-3-8 0z" fill="#e8602c"/><path d="M19 12q4 3 8 0l-1 6q-4 3-8 0z" fill="#8cc63f"/><path d="M9 19q4-3 8 0l-1 6q-4-3-8 0z" fill="#4fa3e6"/><path d="M18 19q4 3 8 0l-1 6q-4 3-8 0z" fill="#fbd04a"/></svg></button>
  <button aria-label="Firefox" class="ml-[26px]"><svg class="h-[30px] w-[30px]" viewBox="0 0 30 30"><circle cx="16" cy="12" r="11" fill="#2f7fc4"/><path d="M12 3q6-3 10 2l-4 4z" fill="#a9dcf5"/><path d="M3 3c2 1 3 3 5 3 3 0 5 1 5 3-4 1-5 5-3 8 3 4 9 4 13 0 3-3 3-8 1-12 4 3 6 8 5 13-2 7-8 11-14 11C6 29 0 21 1 13c0-4 1-7 2-10z" fill="#e2641b"/><path d="M25 7c3 6 2 13-3 17 3-5 4-11 3-17z" fill="#fbb832"/></svg></button>
  <button aria-label="Media launcher" class="ml-[29px]"><svg class="h-[28px] w-[30px]" viewBox="0 0 30 28"><path d="M3 14C6 5 18 0 26 3c6 3 1 12-5 16l-3-2c5-4 6-9 2-9-6 0-9 3-11 7z" fill="#f48a1c"/><path d="M2 18c5-4 12-4 15-1-1 5-8 9-15 10z" fill="#e87a10"/><path d="M5 12c5-7 12-8 17-7" stroke="#ffc66b" stroke-width="2" fill="none"/></svg></button>
  <div class="ml-[15px] flex h-full gap-0.5">
    <button aria-label="Explorer" class="flex w-14 items-center justify-center rounded-sm border border-[#8a8f94] bg-linear-to-b from-[#85888c] to-[#24272b]"><svg class="h-[30px] w-8" viewBox="0 0 32 30"><path d="M2 4l5-2h22v24H2z" fill="#e9dc86" stroke="#b5a552"/><path d="M7 5h20" stroke="#4e7c3b" stroke-width="2" stroke-dasharray="4 3"/><path d="M2 10h28" stroke="#fff5b8" stroke-width="2"/><path d="M6 29v-5q0-4 4-4h12q4 0 4 4v5" fill="none" stroke="#72c4e8" stroke-width="3"/></svg></button>
    <button aria-label="Adobe Flash" class="flex w-14 items-center justify-center rounded-sm border border-[#d4d6d8] bg-linear-to-b from-[#b3b5b8] to-[#77797e]"><span class="flex h-[26px] w-7 items-center justify-center border border-[#b32f3a] bg-linear-to-b from-[#9c0f1c] to-[#74060f] font-['DejaVu_Sans',sans-serif] text-[12px] font-bold text-[#f4e2e2]">Fl</span></button>
    <button aria-label="Picture viewer" class="flex w-14 items-center justify-center rounded-sm border border-[#8a8f94] bg-linear-to-b from-[#85888c] to-[#24272b]"><svg class="h-[26px] w-[22px]" viewBox="0 0 22 26"><path d="M2 1h18l1 20H1z" fill="#9ecbeb"/><path d="M5 17L10 7l3 5 2-2 3 7z" fill="#edd8c2"/><path d="M6 12l4-5 2 4" fill="#e79a3c"/><path d="M0 21h22v4H0z" fill="#e3eaf0"/></svg></button>
    <button aria-label="Screen recorder" class="flex w-14 items-center justify-center rounded-sm border border-[#8a8f94] bg-linear-to-b from-[#85888c] to-[#24272b]"><svg class="h-[30px] w-[30px]" viewBox="0 0 30 30"><rect width="30" height="30" rx="2" fill="#0a10cc"/><path d="M4 4h22v22H4z" fill="none" stroke="#c9ceff" stroke-width="2"/><path d="M11 7h5v5h-5zM7 12h4v4H7zM13 13h3v3h-3z" fill="#fff"/><path d="M19 18h5M20 21h4M19 18v5" stroke="#aab2ff"/></svg></button>
  </div>
  <div class="ml-auto flex h-full items-center text-[#eef]">
    <svg class="h-1 w-[7px]" viewBox="0 0 6 4"><path d="M0 4h6L3 0z" fill="#eee"/></svg>
    <svg class="ml-3 h-[14px] w-3" viewBox="0 0 12 14"><path d="M1 1h7v3h3v8H2z" fill="#ddd"/><path d="M3 4h4M3 6h3M8 7l2 2M4 9l3 2" stroke="#334" stroke-width="1.300"/></svg>
    <svg class="ml-3 h-[14px] w-[14px]" viewBox="0 0 14 14"><path d="M1 5h3l4-4v12L4 9H1z" fill="#eee"/><path d="M10 4q2 3 0 6M12 2q3 5 0 10" fill="none" stroke="#bbc"/></svg>
    <div class="ml-2.5 w-[62px] text-center text-[11px] leading-[15px]"><div>10:31 AM</div><div>11/9/2012</div></div>
    <div class="ml-1 h-full w-2.5 border-l border-[#6c7f8c] bg-linear-to-b from-[#4c5c68] to-[#16222c]"></div>
  </div>
</footer>

<script>
  const repeat = (n, f) => Array.from({ length: n }, (_, i) => f(i)).join('');
  document.getElementById('ruler').innerHTML = repeat(22, i => `<span class="w-0 flex-1 text-center">${(i + 1) * 5}</span>`);
  document.getElementById('frames').innerHTML = repeat(18, () => '<span class="flex flex-1 justify-center"><span class="w-2 bg-[#f0f0f0]"></span></span>');
  const buttonIcon = '<svg class="h-4 w-4" viewBox="0 0 16 16"><path d="M1 1h12v8H1z" fill="#c99a4e"/><path d="M8 1l3 3-4 5-3-2z" fill="#7a5522"/><path d="M1 9l3-1 4 2 6-1v5H2z" fill="#e8e6fa" stroke="#555a88"/></svg>';
  const graphicIcon = '<svg class="h-[15px] w-[14px]"><use href="#graphic"/></svg>';
  document.getElementById('items').innerHTML = repeat(8, i => `<tr class="h-[19px] ${i ? '' : 'border-b border-[#999]'}"><td class="pl-0.5">${i ? graphicIcon : buttonIcon}</td><td>${i ? 'Tween ' + i : 'stop'}</td><td>${i ? 'Graph' : 'Butto'}</td></tr>`);
</script>
</body>
</html>
